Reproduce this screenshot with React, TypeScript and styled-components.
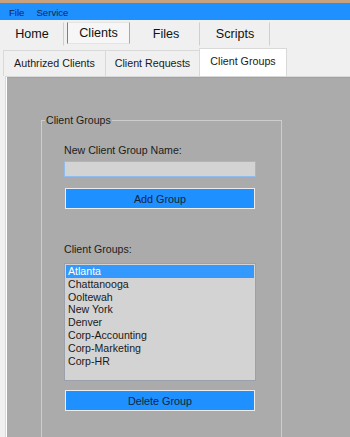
import React from "react";
import styled, { createGlobalStyle } from "styled-components";

const GlobalStyle = createGlobalStyle`
  html, body {
    margin: 0;
    padding: 0;
    background: #f0f0f0;
  }
  body {
    font-family: "Liberation Sans", Arial, sans-serif;
    color: #111;
  }
`;

const Window = styled.div`
  display: flex;
  flex-direction: column;
  width: 350px;
  height: 437px;
  overflow: hidden;
  background: #f0f0f0;
`;

const TitleStrip = styled.div`
  height: 3px;
  flex-shrink: 0;
  background: #c8a17f;
`;

const MenuBar = styled.div`
  display: flex;
  align-items: center;
  height: 17px;
  flex-shrink: 0;
  padding-left: 3px;
  background: #1e90ff;
`;

const MenuItem = styled.span`
  padding: 1px 6px 0;
  font-size: 9.6px;
  color: #14264a;
`;

const MainTabs = styled.div`
  display: flex;
  height: 26px;
  flex-shrink: 0;
`;

const MainTab = styled.div<{ $w: number; $gap: number; $active?: boolean }>`
  display: flex;
  align-items: center;
  justify-content: center;
  width: ${(p) => p.$w}px;
  margin-left: ${(p) => p.$gap}px;
  box-sizing: border-box;
  font-size: 12.6px;
  color: #111;
  margin-top: 2px;
  margin-bottom: ${(p) => (p.$active ? 2 : 0)}px;
  border-right: 1px solid ${(p) => (p.$active ? "#a9a9a9" : "#cfcfcf")};
  border-left: 1px solid ${(p) => (p.$active ? "#7f7f7f" : "transparent")};
  border-top: 1px solid ${(p) => (p.$active ? "#e4e4e4" : "transparent")};
  border-bottom: 1px solid ${(p) => (p.$active ? "#e4e4e4" : "transparent")};
  background: ${(p) => (p.$active ? "#f6f6f6" : "transparent")};
`;

const SubTabs = styled.div`
  display: flex;
  align-items: flex-end;
  height: 30px;
  padding-left: 3px;
  flex-shrink: 0;
`;

const SubTab = styled.div<{ $w: number; $active?: boolean }>`
  display: flex;
  align-items: center;
  justify-content: center;
  box-sizing: border-box;
  width: ${(p) => p.$w}px;
  height: ${(p) => (p.$active ? 28 : 26)}px;
  margin-left: -1px;
  padding-bottom: ${(p) => (p.$active ? 3 : 1)}px;
  border: 1px solid #d9d9d9;
  border-bottom: none;
  background: ${(p) => (p.$active ? "#ffffff" : "#f0f0f0")};
  font-size: 10.7px;
  color: #1a1a1a;
  position: relative;
  z-index: ${(p) => (p.$active ? 1 : 0)};

  &:first-child {
    margin-left: 0;
  }
`;

const TabBody = styled.div`
  flex: 1;
  min-height: 0;
  display: flex;
  margin-left: 5px;
  border-left: 1px solid #dadada;
  border-top: 1px solid #dadada;
  padding: 0 0 0 1px;
  background: #ffffff;
`;

const Page = styled.div`
  flex: 1;
  background: #ababab;
  border-top: 1px solid #a2a2a2;
  padding: 36px 0 0 34px;
`;

const GroupBox = styled.fieldset`
  width: 241px;
  box-sizing: border-box;
  min-width: 0;
  height: 340px;
  margin: 0;
  padding: 18px 0 0 22px;
  border: 1px solid #cdcdcd;
  display: flex;
  flex-direction: column;
  align-items: flex-start;
`;

const Legend = styled.legend`
  margin-left: -19px;
  padding: 0 1px;
  font-size: 10.6px;
  line-height: 12px;
  color: #1c1c1c;
`;

const Label = styled.div<{ $top: number }>`
  margin-top: ${(p) => p.$top}px;
  font-size: 10.6px;
  line-height: 12px;
  color: #1c1c1c;
`;

const TextBox = styled.input`
  width: 192px;
  height: 16px;
  box-sizing: border-box;
  margin: 5px 0 0;
  padding: 0 2px;
  border: 1px solid #8fbcec;
  background: #d3d3d3;
  outline: none;
  font-family: inherit;
  font-size: 10.6px;
`;

const BlueButton = styled.button<{ $top: number }>`
  width: 190px;
  height: 21px;
  box-sizing: border-box;
  margin: ${(p) => p.$top}px 0 0 1px;
  padding: 0;
  border: 1px solid #ececec;
  background: #1e90ff;
  font-family: inherit;
  font-size: 10.8px;
  color: #14233a;
`;

const ListBox = styled.div`
  width: 192px;
  height: 118px;
  box-sizing: border-box;
  margin-top: 8px;
  padding: 1px 0 0 1px;
  border: 1px solid #9aa1ad;
  background: #d3d3d3;
  display: flex;
  flex-direction: column;
`;

const ListItem = styled.div<{ $selected?: boolean }>`
  width: 188px;
  height: 12.8px;
  line-height: 12.8px;
  padding-left: 2px;
  box-sizing: border-box;
  font-size: 10.6px;
  background: ${(p) => (p.$selected ? "#3399ff" : "transparent")};
  color: ${(p) => (p.$selected ? "#ffffff" : "#1a1a1a")};
`;

const groups = [
  "Atlanta",
  "Chattanooga",
  "Ooltewah",
  "New York",
  "Denver",
  "Corp-Accounting",
  "Corp-Marketing",
  "Corp-HR",
];

export default function App() {
  return (
    <Window>
      <GlobalStyle />
      <TitleStrip />
      <MenuBar>
        <MenuItem>File</MenuItem>
        <MenuItem>Service</MenuItem>
      </MenuBar>
      <MainTabs>
        <MainTab $w={64} $gap={0}>Home</MainTab>
        <MainTab $w={63} $gap={3} $active>Clients</MainTab>
        <MainTab $w={68} $gap={2}>Files</MainTab>
        <MainTab $w={70} $gap={0}>Scripts</MainTab>
      </MainTabs>
      <SubTabs>
        <SubTab $w={103}>Authrized Clients</SubTab>
        <SubTab $w={95}>Client Requests</SubTab>
        <SubTab $w={88} $active>Client Groups</SubTab>
      </SubTabs>
      <TabBody>
        <Page>
          <GroupBox>
            <Legend>Client Groups</Legend>
            <Label $top={0}>New Client Group Name:</Label>
            <TextBox />
            <BlueButton $top={11}>Add Group</BlueButton>
            <Label $top={34}>Client Groups:</Label>
            <ListBox>
              {groups.map((g, i) => (
                <ListItem key={g} $selected={i === 0}>{g}</ListItem>
              ))}
            </ListBox>
            <BlueButton $top={9}>Delete Group</BlueButton>
          </GroupBox>
        </Page>
      </TabBody>
    </Window>
  );
}
